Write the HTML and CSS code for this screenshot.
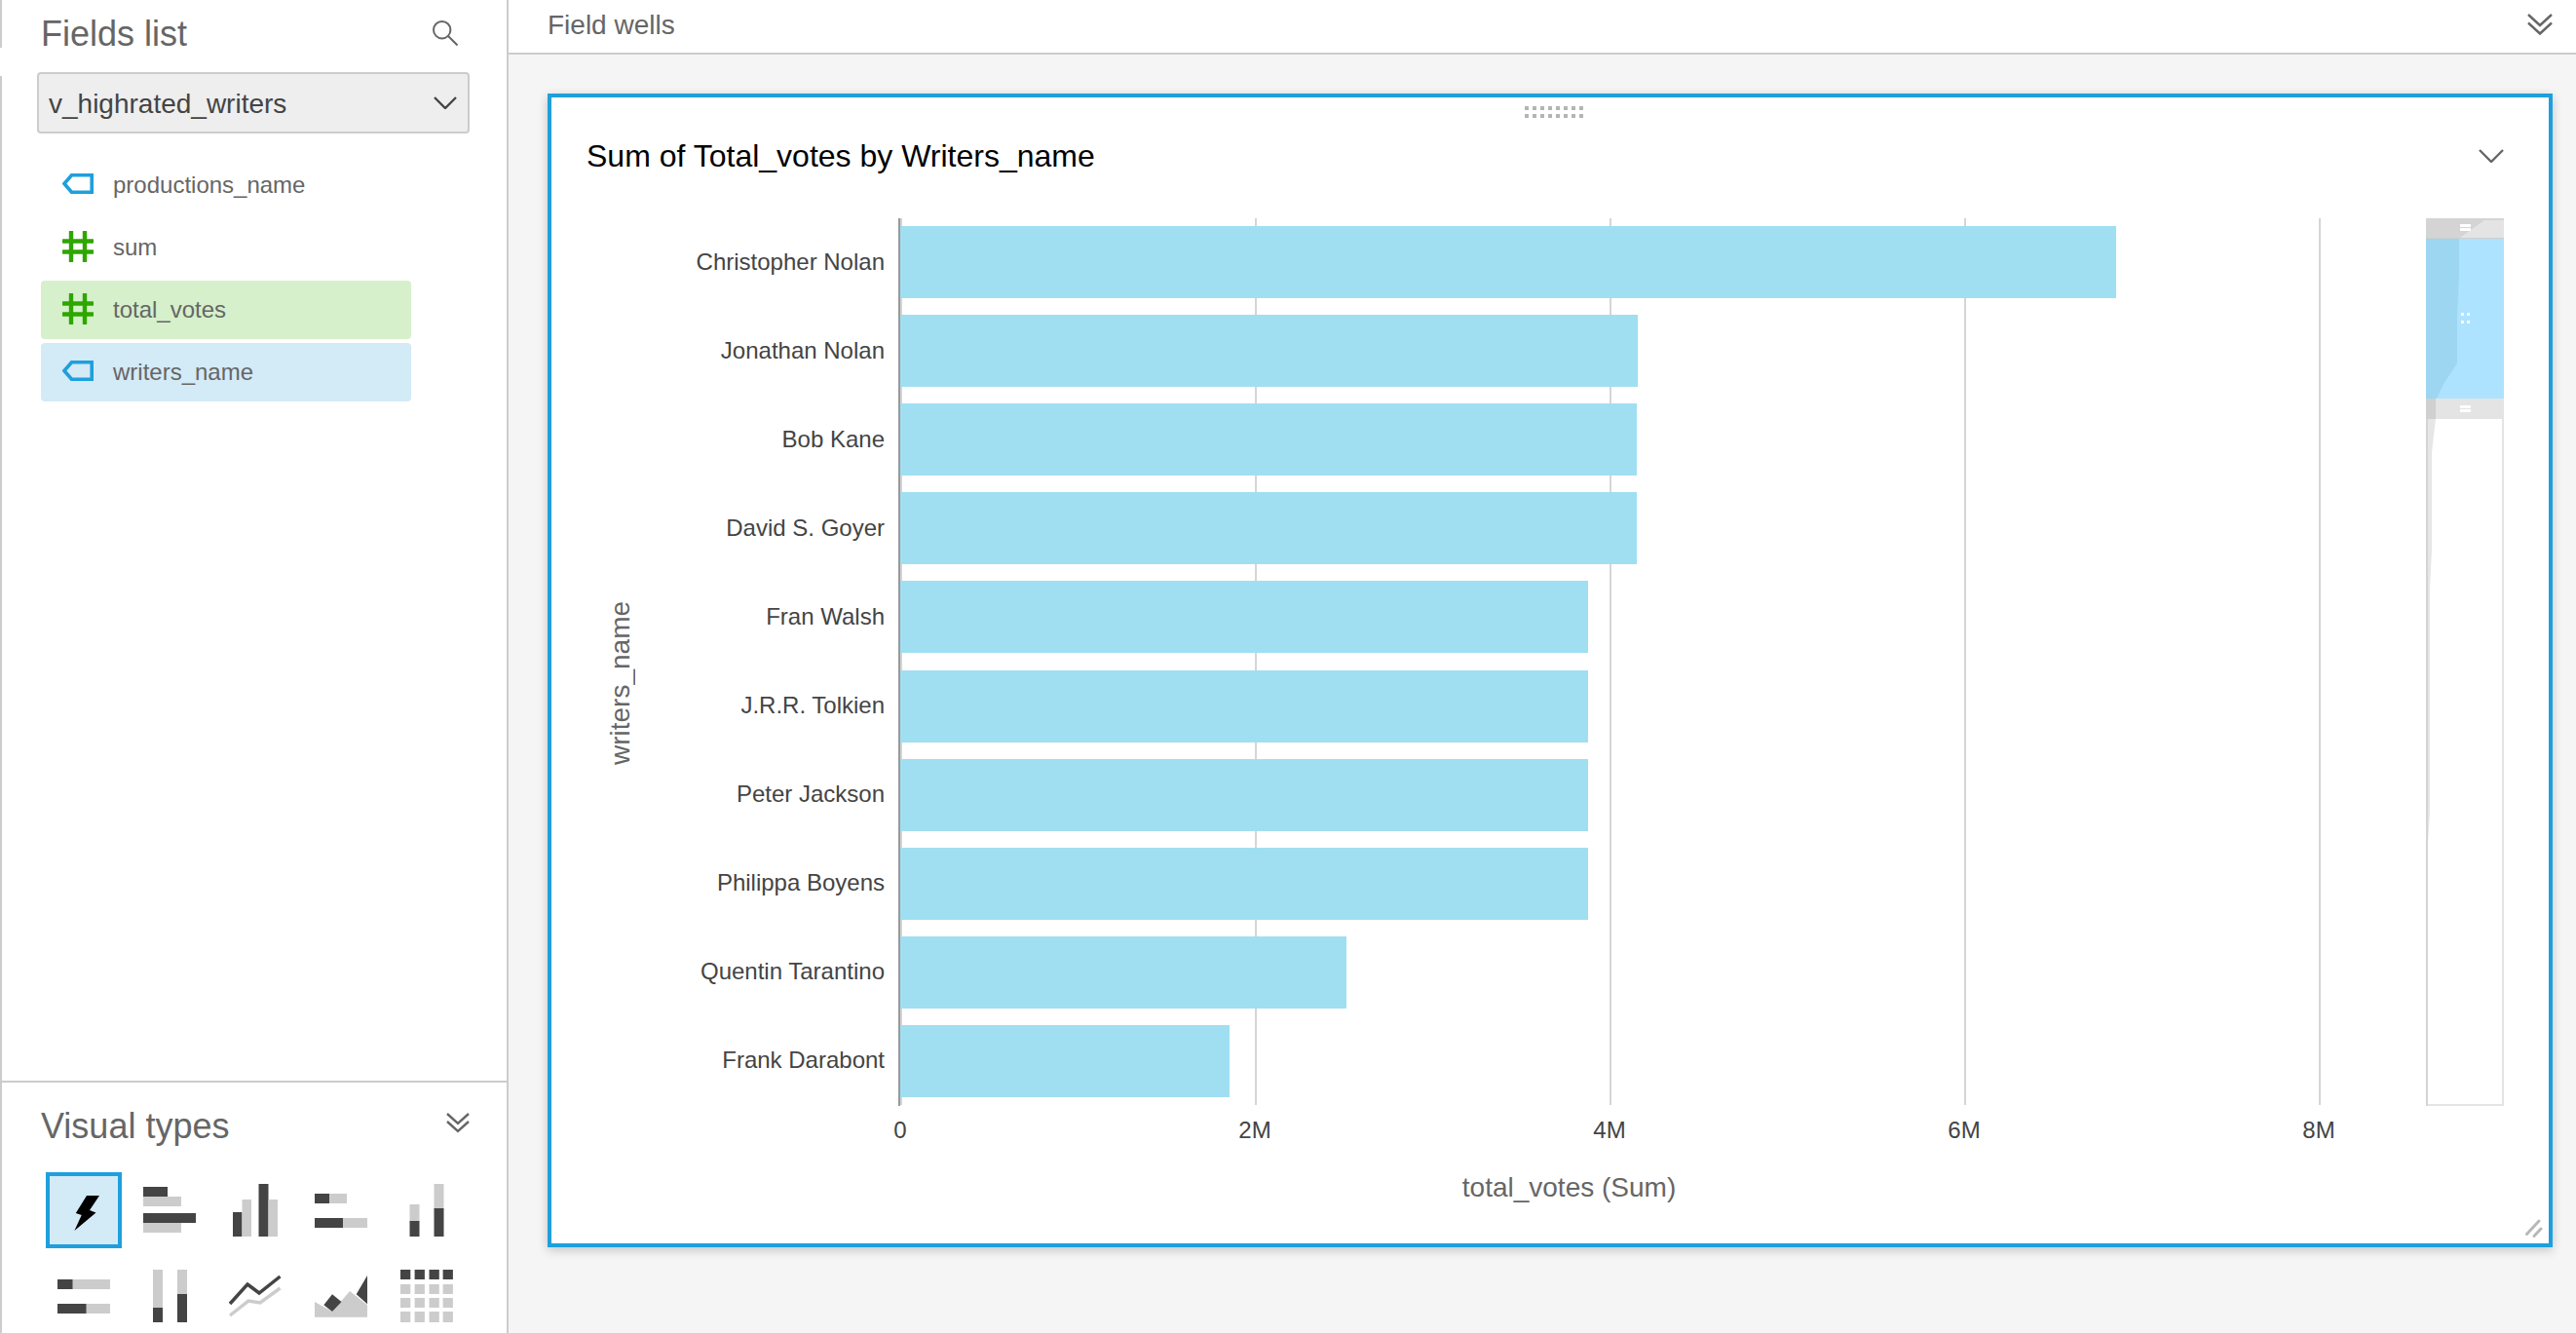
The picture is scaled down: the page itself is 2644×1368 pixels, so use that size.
FILE: index.html
```html
<!DOCTYPE html>
<html lang="en">
<head>
<meta charset="utf-8">
<title>Sum of Total_votes by Writers_name</title>
<link rel="stylesheet" href="styles.css">
</head>
<body>
<div class="app">
  <aside class="sidebar">
    <span class="notch"></span>
    <section class="fields">
      <header class="fields-head">
        <h2 class="panel-title">Fields list</h2>
        <svg class="ic-search" width="26" height="26" viewBox="0 0 26 26"><circle cx="9.7" cy="9.7" r="8.7"/><line x1="16" y1="16" x2="25.5" y2="25.5"/></svg>
      </header>
      <div class="select">
        <span>v_highrated_writers</span>
        <svg class="ic-line dark" width="24" height="13" viewBox="0 0 24 13"><polyline points="1,1 12,12 23,1"/></svg>
      </div>
      <ul class="field-list">
        <li class="field">
          <svg class="ic-tag" width="32" height="21" viewBox="0 0 32 21"><path d="M30.200 1.800H9.500L2 10.500l7.500 8.700h20.700z"/></svg>
          <span>productions_name</span>
        </li>
        <li class="field">
          <svg class="ic-hash" width="32" height="32" viewBox="0 0 32 32"><path d="M9 1v30M23 1v30M1 10.500h30M1 21.500h30"/></svg>
          <span>sum</span>
        </li>
        <li class="field field-green">
          <svg class="ic-hash" width="32" height="32" viewBox="0 0 32 32"><path d="M9 1v30M23 1v30M1 10.500h30M1 21.500h30"/></svg>
          <span>total_votes</span>
        </li>
        <li class="field field-blue">
          <svg class="ic-tag" width="32" height="21" viewBox="0 0 32 21"><path d="M30.200 1.800H9.500L2 10.500l7.500 8.700h20.700z"/></svg>
          <span>writers_name</span>
        </li>
      </ul>
    </section>
    <section class="visuals">
      <header class="visuals-head">
        <h2 class="panel-title">Visual types</h2>
        <svg class="ic-line ic-collapse" width="24" height="21" viewBox="0 0 24 21"><polyline points="1,1 12,11 23,1"/><polyline points="1,9 12,19 23,9"/></svg>
      </header>
      <div class="tiles">
        <div class="tile tile-on"><svg width="78" height="78" viewBox="0 0 78 78"><polygon class="k" points="42,24 55,24 45,39 51.500,41.500 29.400,60 36.700,44 30.800,42"/></svg></div>
        <div class="tile"><svg width="78" height="78" viewBox="0 0 78 78"><rect class="d" x="12" y="15" width="25" height="10"/><rect class="l" x="12" y="25" width="39" height="10"/><rect class="d" x="12" y="42" width="54" height="10"/><rect class="l" x="12" y="52" width="39" height="10"/></svg></div>
        <div class="tile"><svg width="78" height="78" viewBox="0 0 78 78"><rect class="d" x="16" y="41" width="9.500" height="25"/><rect class="l" x="25.500" y="28" width="9.500" height="38"/><rect class="d" x="42.500" y="12" width="10" height="54"/><rect class="l" x="52.500" y="28" width="9.500" height="38"/></svg></div>
        <div class="tile"><svg width="78" height="78" viewBox="0 0 78 78"><rect class="l" x="12" y="22" width="33" height="10"/><rect class="d" x="12" y="22" width="15" height="10"/><rect class="l" x="12" y="47" width="54" height="10"/><rect class="d" x="12" y="47" width="29" height="10"/></svg></div>
        <div class="tile"><svg width="78" height="78" viewBox="0 0 78 78"><rect class="l" x="21.500" y="33" width="10" height="18"/><rect class="d" x="21.500" y="50" width="10" height="16"/><rect class="l" x="46.500" y="12" width="10" height="26"/><rect class="d" x="46.500" y="37" width="10" height="29"/></svg></div>
        <div class="tile"><svg width="78" height="78" viewBox="0 0 78 78"><rect class="l" x="12" y="22" width="54" height="10"/><rect class="d" x="12" y="22" width="15.500" height="10"/><rect class="l" x="12" y="47" width="54" height="10"/><rect class="d" x="12" y="47" width="29.500" height="10"/></svg></div>
        <div class="tile"><svg width="78" height="78" viewBox="0 0 78 78"><rect class="l" x="22" y="12" width="10" height="39"/><rect class="d" x="22" y="51" width="10" height="15"/><rect class="l" x="47" y="12" width="10" height="25"/><rect class="d" x="47" y="37" width="10" height="29"/></svg></div>
        <div class="tile"><svg width="78" height="78" viewBox="0 0 78 78"><polyline class="ln-l" points="13,59 32,44 44,46 64.500,31"/><polyline class="ln-d" points="13,47 31,27 43,36 64.500,19"/></svg></div>
        <div class="tile"><svg width="78" height="78" viewBox="0 0 78 78"><polygon class="l" points="12,45 30,55 48,34 66,48.300 66,60.700 12,60.700"/><polygon class="d" points="21.300,48.300 30,37.300 39.500,45 30,55"/><polygon class="d" points="66,18 54.700,37.300 66,47.300"/></svg></div>
        <div class="tile"><svg width="78" height="78" viewBox="0 0 78 78"><rect class="d" x="12" y="12" width="10.300" height="10"/><rect class="d" x="26.600" y="12" width="10.300" height="10"/><rect class="d" x="41.500" y="12" width="10.300" height="10"/><rect class="d" x="55.600" y="12" width="10.300" height="10"/><rect class="l" x="12" y="27" width="10.300" height="10"/><rect class="l" x="26.600" y="27" width="10.300" height="10"/><rect class="l" x="41.500" y="27" width="10.300" height="10"/><rect class="l" x="55.600" y="27" width="10.300" height="10"/><rect class="l" x="12" y="41" width="10.300" height="10"/><rect class="l" x="26.600" y="41" width="10.300" height="10"/><rect class="l" x="41.500" y="41" width="10.300" height="10"/><rect class="l" x="55.600" y="41" width="10.300" height="10"/><rect class="l" x="12" y="55" width="10.300" height="11"/><rect class="l" x="26.600" y="55" width="10.300" height="11"/><rect class="l" x="41.500" y="55" width="10.300" height="11"/><rect class="l" x="55.600" y="55" width="10.300" height="11"/></svg></div>
      </div>
    </section>
  </aside>

  <main class="main">
    <header class="wells">
      <span class="wells-text">Field wells</span>
      <svg class="ic-line" width="26" height="23" viewBox="0 0 26 23"><polyline points="1,1 13,12 25,1"/><polyline points="1,9.500 13,20.500 25,9.500"/></svg>
    </header>
    <article class="card">
      <svg class="grip" width="60" height="12" viewBox="0 0 60 12"><defs><pattern id="gd" width="8" height="8" patternUnits="userSpaceOnUse"><rect width="4" height="4" fill="#b4b4b4"/></pattern></defs><rect width="60" height="12" fill="url(#gd)"/></svg>
      <header class="card-head">
        <h1 class="card-title">Sum of Total_votes by Writers_name</h1>
        <svg class="ic-line" width="26" height="14" viewBox="0 0 26 14"><polyline points="1,1 13,13 25,1"/></svg>
      </header>
      <div class="chart">
        <div class="y-title">writers_name</div>
        <div class="chart-main">
          <div class="plot-row">
            <div class="plot">
              <div class="gridlines"><i></i><i></i><i></i><i></i></div>
              <span class="axis"></span>
              <div class="rows">
                <div class="row"><span class="label">Christopher Nolan</span><span class="bar" style="width:1248px"></span></div>
                <div class="row"><span class="label">Jonathan Nolan</span><span class="bar" style="width:757px"></span></div>
                <div class="row"><span class="label">Bob Kane</span><span class="bar" style="width:756px"></span></div>
                <div class="row"><span class="label">David S. Goyer</span><span class="bar" style="width:756px"></span></div>
                <div class="row"><span class="label">Fran Walsh</span><span class="bar" style="width:706px"></span></div>
                <div class="row"><span class="label">J.R.R. Tolkien</span><span class="bar" style="width:706px"></span></div>
                <div class="row"><span class="label">Peter Jackson</span><span class="bar" style="width:706px"></span></div>
                <div class="row"><span class="label">Philippa Boyens</span><span class="bar" style="width:706px"></span></div>
                <div class="row"><span class="label">Quentin Tarantino</span><span class="bar" style="width:458px"></span></div>
                <div class="row"><span class="label">Frank Darabont</span><span class="bar" style="width:338px"></span></div>
              </div>
            </div>
            <svg class="mini" width="80" height="911" viewBox="0 0 80 911">
              <rect x="1" y="1" width="78" height="909" fill="#fff" stroke="#e4e4e4" stroke-width="2"/>
              <polygon fill="#e6e6e6" points="0,206 10,206 6,240 6,340 4,380 4,610 2,640 0,640"/>
              <rect x="0" y="206" width="2" height="705" fill="#d4d4d4"/>
              <rect x="0" y="0" width="80" height="21" fill="#e4e4e4"/>
              <polygon fill="#d4d4d4" points="0,0 80,0 80,2 60,2 35,20 0,20"/>
              <rect x="0" y="20" width="80" height="1" fill="#cfcfcf"/>
              <rect x="0" y="21" width="80" height="164" fill="#ade3ff"/>
              <polygon fill="#9dd6f0" points="0,21 34,21 34,60 32,100 32,149 18,170 11,185 0,185"/>
              <rect x="0" y="185" width="80" height="21" fill="#e4e4e4"/>
              <polygon fill="#d0d0d0" points="0,185 10,185 10,206 0,206"/>
              <rect class="w" x="35" y="6" width="11" height="3"/><rect class="w" x="35" y="10" width="11" height="3"/>
              <rect class="w" x="35" y="192" width="11" height="3"/><rect class="w" x="35" y="196" width="11" height="3"/>
              <rect class="w" x="36" y="97" width="3" height="3"/><rect class="w" x="42" y="97" width="3" height="3"/>
              <rect class="w" x="36" y="105" width="3" height="3"/><rect class="w" x="42" y="105" width="3" height="3"/>
            </svg>
          </div>
          <div class="ticks"><span>0</span><span>2M</span><span>4M</span><span>6M</span><span>8M</span></div>
          <div class="x-title">total_votes (Sum)</div>
        </div>
      </div>
      <svg class="resize" width="18" height="19" viewBox="0 0 18 19"><path d="M1.500 15.500 14 2M9 17.500l7-7.500"/></svg>
    </article>
  </main>
</div>
</body>
</html>
```

FILE: styles.css
```css
* { box-sizing: border-box; }
html, body { margin: 0; padding: 0; }
body {
  width: 2644px;
  height: 1368px;
  overflow: hidden;
  font-family: "Liberation Sans", Arial, sans-serif;
  background: #f5f5f5;
}
h1, h2, ul { margin: 0; padding: 0; font-weight: 400; }
ul { list-style: none; }
svg { display: block; flex: none; }

.app { display: flex; height: 1368px; }

/* Sidebar */
.sidebar {
  position: relative;
  width: 522px;
  height: 1368px;
  flex: none;
  display: flex;
  flex-direction: column;
  background: #fff;
  border-left: 2px solid #ccc;
  border-right: 2px solid #ccc;
}
.notch {
  position: absolute;
  left: -2px;
  top: 49px;
  width: 2px;
  height: 29px;
  background: #fff;
}
.fields { height: 1109px; flex: none; padding-left: 36px; }
.fields-head {
  height: 74px;
  display: flex;
  align-items: center;
  justify-content: space-between;
  padding: 0 50px 4px 4px;
}
.panel-title { font-size: 36px; line-height: 40px; color: #666; }
.ic-search { fill: none; stroke: #666; stroke-width: 2; margin-top: -3px; }
.ic-line { fill: none; stroke: #666; stroke-width: 2.4; }
.ic-line.dark { stroke: #444; }

.select {
  width: 444px;
  height: 63px;
  display: flex;
  align-items: center;
  justify-content: space-between;
  padding: 2px 11px 0 10px;
  background: #eee;
  border: 2px solid #ccc;
  border-radius: 4px;
  font-size: 28px;
  color: #444;
}
.select .ic-line { margin-top: -2px; }
.field-list { margin: 23px 0 0 4px; display: flex; flex-direction: column; gap: 4px; }
.field {
  width: 380px;
  height: 60px;
  display: flex;
  align-items: center;
  gap: 20px;
  padding-left: 22px;
  border-radius: 4px;
  font-size: 24px;
  color: #666;
}
.field-green { background: #d5f0cb; }
.field-blue { background: #d3eaf7; }
.ic-tag { fill: none; stroke: #1f9fdc; stroke-width: 3.6; margin-top: -3px; }
.ic-hash { fill: none; stroke: #2ea600; stroke-width: 4.4; stroke-linecap: round; margin-top: -3px; }

.visuals { flex: 1; border-top: 2px solid #ccc; padding: 25px 38px 0 40px; }
.visuals-head {
  display: flex;
  align-items: flex-start;
  justify-content: space-between;
  height: 40px;
}
.ic-collapse { margin-top: 6px; }
.tiles {
  margin: 27px 0 0 5px;
  display: grid;
  grid-template-columns: repeat(5, 78px);
  grid-auto-rows: 78px;
  gap: 10px;
}
.tile-on { background: #d3eaf7; outline: 4px solid #1f9fdc; outline-offset: -4px; }
.k { fill: #000; }
.d { fill: #444; }
.l { fill: #ccc; }
.ln-d { fill: none; stroke: #444; stroke-width: 3.5; }
.ln-l { fill: none; stroke: #ccc; stroke-width: 3.5; }
.w { fill: #fff; }

/* Main */
.main { flex: 1; min-width: 0; }
.wells {
  height: 56px;
  display: flex;
  align-items: center;
  justify-content: space-between;
  padding: 0 24px 4px 40px;
  background: #fff;
  border-bottom: 2px solid #ccc;
  font-size: 28px;
  color: #666;
}
.wells-text { padding-top: 2px; }
.card {
  position: relative;
  width: 2058px;
  height: 1184px;
  margin: 40px 0 0 40px;
  background: #fff;
  border: 4px solid #1f9fdc;
  box-shadow: 0 3px 10px rgba(0, 0, 0, .2);
}
.grip { position: absolute; left: 999px; top: 9px; }
.card-head {
  height: 124px;
  display: flex;
  align-items: center;
  justify-content: space-between;
  padding: 0 46px 4px 36px;
}
.card-title { font-size: 32px; line-height: 40px; color: #000; }

.chart { display: flex; padding-left: 57px; }
.y-title {
  width: 28px;
  height: 954px;
  flex: none;
  writing-mode: vertical-rl;
  transform: rotate(180deg);
  text-align: center;
  font-size: 28px;
  line-height: 28px;
  color: #666;
}
.chart-main { width: 1919px; flex: none; }
.plot-row { display: flex; justify-content: space-between; height: 911px; }
.plot { position: relative; width: 1731px; }
.gridlines {
  position: absolute;
  left: 273px;
  top: 0;
  height: 910px;
  display: flex;
  border-left: 2px solid #d5d5d5;
}
.gridlines i { width: 364px; border-right: 2px solid #d5d5d5; }
.axis { position: absolute; left: 271px; top: 0; width: 2px; height: 911px; background: #999; }
.rows {
  position: relative;
  display: flex;
  flex-direction: column;
  gap: 17.11px;
  padding-top: 8px;
}
.row { display: flex; align-items: center; height: 74px; }
.label {
  width: 257px;
  margin-right: 16px;
  flex: none;
  text-align: right;
  font-size: 24px;
  line-height: 26px;
  padding-bottom: 1px;
  color: #444;
}
.bar { display: block; height: 74px; background: #a0dff2; }

.ticks { display: flex; margin: 9px 0 0 91px; }
.ticks span { width: 364px; text-align: center; font-size: 24px; line-height: 32px; color: #444; }
.x-title { margin-top: 27px; text-align: center; font-size: 28px; line-height: 32px; color: #666; }
.resize {
  position: absolute;
  right: 6px;
  bottom: 6px;
  fill: none;
  stroke: #b8b8b8;
  stroke-width: 3;
  stroke-linecap: round;
}
```
